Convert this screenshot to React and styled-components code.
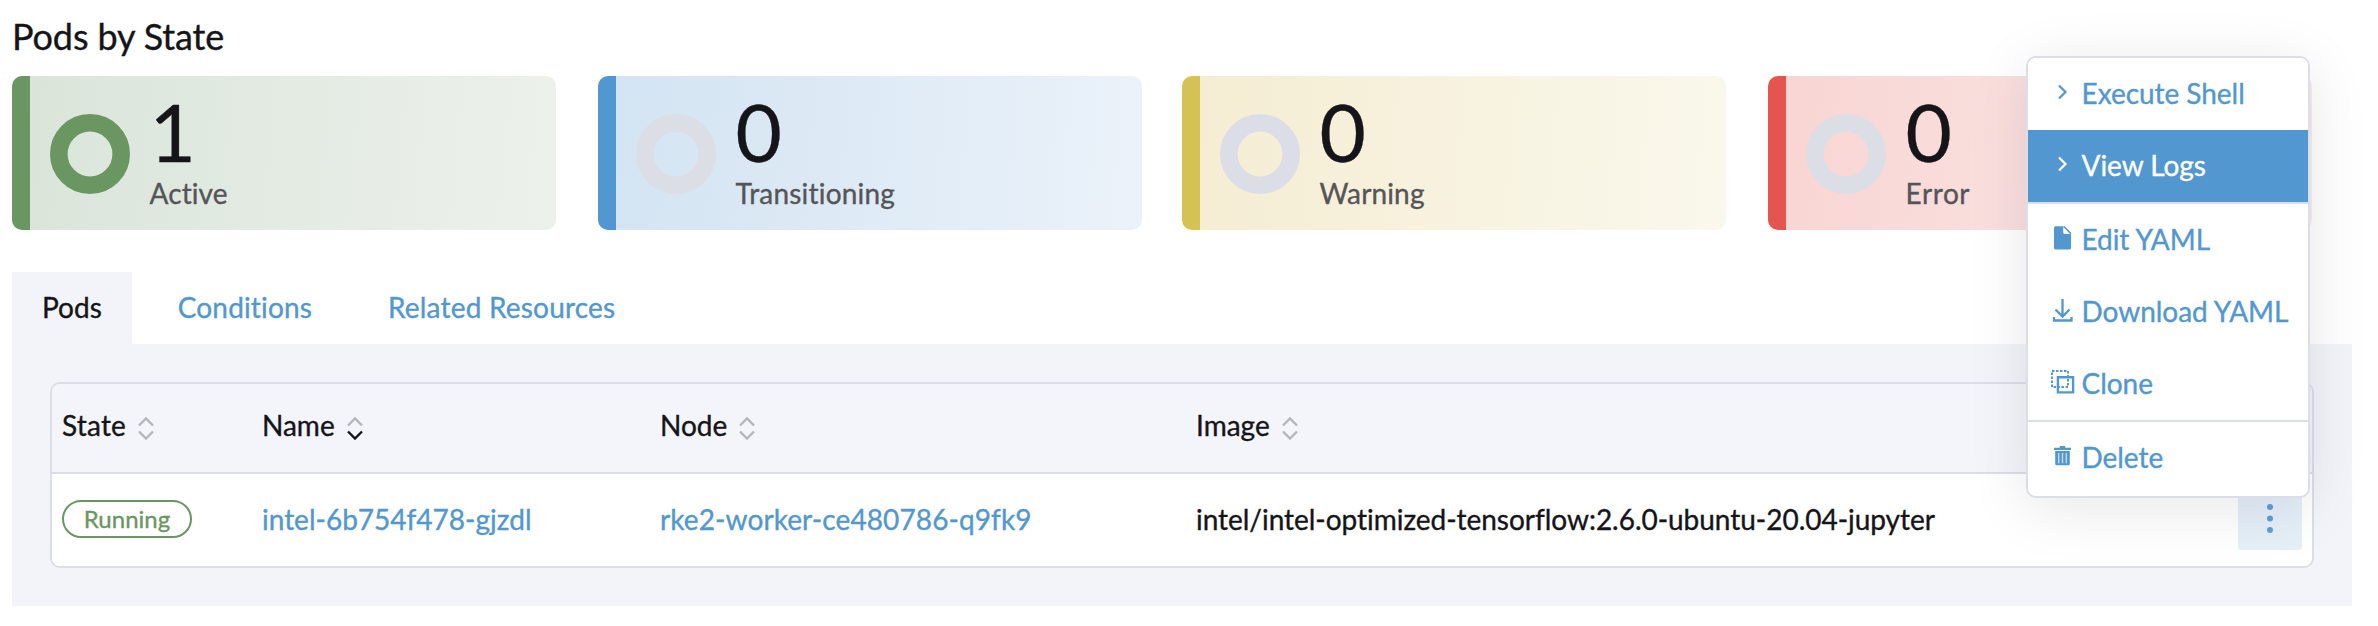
import React from 'react';
import styled, { createGlobalStyle } from 'styled-components';

const GlobalStyle = createGlobalStyle`
  * { box-sizing: border-box; }
  body {
    margin: 0;
    background: #fff;
    color: #141419;
    font-family: Lato, 'Liberation Sans', sans-serif;
    font-size: 28px;
    line-height: 34px;
    font-variant-ligatures: none;
    -webkit-text-stroke: 0.35px currentColor;
  }
`;

const Page = styled.main`
  position: relative;
  width: 2378px;
  height: 626px;
  padding: 15px 26px 20px 12px;
  overflow: hidden;
`;

const Title = styled.h3`
  margin: 0 0 17px;
  height: 44px;
  font-size: 36px;
  font-weight: 400;
  line-height: 43px;
  letter-spacing: -0.12px;
`;

const Cards = styled.section`
  display: grid;
  grid-template-columns: 586px 584px 586px 544px;
`;

const Card = styled.article`
  display: flex;
  align-items: center;
  width: 544px;
  height: 154px;
  padding-left: 20px;
  border-left: 18px solid ${(p) => p.$color};
  border-radius: 10px;
  background: linear-gradient(95deg, ${(p) => p.$from}, ${(p) => p.$to});
`;

const Ring = styled.svg`
  width: 80px;
  height: 80px;
  margin: 2px 19.5px 0 0;
`;

const CardText = styled.div`
  display: flex;
  flex-direction: column;
  gap: 5px;
  padding-bottom: 5px;
`;

const Count = styled.div`
  font-size: 80px;
  line-height: 80px;
`;

const CardLabel = styled.div`
  color: #555558;
  line-height: 34px;
  letter-spacing: ${(p) => p.$spacing}px;
`;

const TabBar = styled.nav`
  display: flex;
  margin-top: 42px;
`;

const Tab = styled.a`
  height: 72px;
  padding: 18px 30px;
  margin-right: 16px;
  letter-spacing: ${(p) => p.$spacing || 0}px;
  color: ${(p) => (p.$active ? '#141419' : '#5297cf')};
  background: ${(p) => (p.$active ? '#f3f4f9' : 'transparent')};
`;

const Panel = styled.section`
  height: 262px;
  padding: 38px;
  background: #f3f4f9;
`;

const Table = styled.div`
  height: 186px;
  border: 2px solid #dcdee7;
  border-radius: 10px;
  overflow: hidden;
`;

const Row = styled.div`
  display: grid;
  grid-template-columns: 200px 398px 536px 1fr 64px;
  align-items: center;
  padding: 0 10px;
`;

const HeaderRow = styled(Row)`
  height: 90px;
  border-bottom: 2px solid #dcdee7;
  background: #f4f5fa;
`;

const BodyRow = styled(Row)`
  height: 92px;
  background: #fff;
`;

const HeaderCell = styled.div`
  display: flex;
  align-items: center;
  gap: 11px;
  padding-bottom: 6px;
  letter-spacing: ${(p) => p.$spacing || 0}px;
`;

const SortSvg = styled.svg`
  width: 18px;
  height: 24px;
  margin-top: 6px;
  fill: none;
  stroke-width: 2.4;
`;

const CellText = styled.span`
  padding-bottom: 2px;
  letter-spacing: ${(p) => p.$spacing || 0}px;
`;

const Link = styled(CellText).attrs({ as: 'a' })`
  color: #5297cf;
`;

const Badge = styled.span`
  justify-self: start;
  width: 130px;
  height: 38px;
  margin-top: -2px;
  border: 2px solid #6a9662;
  border-radius: 19px;
  color: #6a9662;
  font-size: 24px;
  line-height: 33px;
  text-align: center;
`;

const ActionButton = styled.button`
  display: flex;
  justify-content: center;
  align-items: center;
  height: 60px;
  width: 64px;
  padding: 0 0 2px;
  border: 0;
  border-radius: 4px;
  background: #e5eff8;
`;

const Menu = styled.div`
  position: absolute;
  top: 56px;
  left: 2026px;
  width: 284px;
  height: 442px;
  border: 2px solid #dcdee7;
  border-radius: 10px;
  background: #fff;
  overflow: hidden;
  box-shadow: 0 10px 60px rgba(20, 20, 40, 0.1);
`;

const MenuItem = styled.div`
  display: flex;
  align-items: center;
  gap: 5.5px;
  height: 72px;
  padding-left: 20px;
  color: ${(p) => (p.$active ? '#fff' : '#5297cf')};
  background: ${(p) => (p.$active ? '#5297cf' : '#fff')};
  letter-spacing: -0.04px;
  white-space: nowrap;

  span { padding-bottom: 2px; }
`;

const MenuIcon = styled.svg`
  flex: none;
  width: 28px;
  height: 28px;
  margin-top: -4px;
`;

const Divider = styled.div`
  height: 2px;
  background: #dcdee7;
`;

const cards = [
  { label: 'Active', spacing: 0.1, count: 1, color: '#6a9662', ring: '#6a9662', from: '#dae5da', to: '#edf1ec' },
  { label: 'Transitioning', spacing: 0.2, count: 0, color: '#5297cf', ring: '#dcdee5', from: '#d3e4f2', to: '#ebf2fa' },
  { label: 'Warning', spacing: 0.15, count: 0, color: '#d6c155', ring: '#dcdee7', from: '#f5edd3', to: '#faf8ec' },
  { label: 'Error', spacing: 0.6, count: 0, color: '#e4554f', ring: '#dcdee5', from: '#f8d5d3', to: '#fbeceb' },
];

function Sort({ down }) {
  return (
    <SortSvg viewBox="0 0 18 24">
      <path d="M2 9.500 9 2.500l7 7" stroke="#b5b6bb" />
      <path d="M2 15.500 9 22.500l7-7" stroke={down ? '#141419' : '#b5b6bb'} />
    </SortSvg>
  );
}

const icons = {
  chevron: <path d="M11 7.500l6.500 6.500-6.500 6.500" fill="none" stroke="currentColor" strokeWidth="2.200" />,
  file: (
    <g fill="currentColor">
      <path d="M7.500 2.300h7.700v6q0 1.700 1.700 1.700h6.100v14q0 1.500-1.500 1.500h-14Q6 25.500 6 24V3.800Q6 2.300 7.500 2.300z" />
      <path d="M16.500 3.200l5.600 5.500h-4.600q-1 0-1-1z" fill="#fff" />
      <path d="M15.500 2.300h1.200L23 8.600V10h-.8L15.500 3.300z" />
    </g>
  ),
  download: (
    <path d="M14.500 3v17.500M7.500 13.500l7 7 7-7M6 21v3.500h17.500V21" fill="none" stroke="currentColor" strokeWidth="2.300" />
  ),
  clone: (
    <g fill="none" stroke="currentColor">
      <path d="M4 19V3H20V19z" strokeWidth="2" strokeDasharray="2.500 1.500" />
      <path d="M9.900 9.200h15.200v15.200H9.900z" strokeWidth="2.400" />
    </g>
  ),
  trash: (
    <g fill="currentColor">
      <path d="M6 5.800h5.500L12 4h5l.5 1.800H23V8H6z" />
      <path d="M7.200 9h14.600v12.800q0 1.500-1.500 1.500H8.700q-1.500 0-1.500-1.500z" />
      <path d="M10.700 11v10.300M14.500 11v10.300M18.300 11v10.300" stroke="#c4dbee" strokeWidth="1.400" />
    </g>
  ),
};

function Item({ icon, active, children }) {
  return (
    <MenuItem $active={active}>
      <MenuIcon viewBox="0 0 28 28">{icons[icon]}</MenuIcon>
      <span>{children}</span>
    </MenuItem>
  );
}

export default function App() {
  return (
    <>
      <GlobalStyle />
      <Page>
        <Title>Pods by State</Title>
        <Cards>
          {cards.map((c) => (
            <Card key={c.label} $color={c.color} $from={c.from} $to={c.to}>
              <Ring viewBox="0 0 80 80">
                <circle cx="40" cy="40" r="31.2" fill="none" stroke={c.ring} strokeWidth="17.600" />
              </Ring>
              <CardText>
                <Count>{c.count}</Count>
                <CardLabel $spacing={c.spacing}>{c.label}</CardLabel>
              </CardText>
            </Card>
          ))}
        </Cards>
        <TabBar>
          <Tab $active>Pods</Tab>
          <Tab $spacing={0.15}>Conditions</Tab>
          <Tab $spacing={0.2}>Related Resources</Tab>
        </TabBar>
        <Panel>
          <Table>
            <HeaderRow>
              <HeaderCell $spacing={0.2}>State<Sort /></HeaderCell>
              <HeaderCell>Name<Sort down /></HeaderCell>
              <HeaderCell>Node<Sort /></HeaderCell>
              <HeaderCell>Image<Sort /></HeaderCell>
            </HeaderRow>
            <BodyRow>
              <Badge>Running</Badge>
              <Link>intel-6b754f478-gjzdl</Link>
              <Link $spacing={0.1}>rke2-worker-ce480786-q9fk9</Link>
              <CellText $spacing={-0.03}>intel/intel-optimized-tensorflow:2.6.0-ubuntu-20.04-jupyter</CellText>
              <ActionButton aria-label="Row actions">
                <svg width="8" height="32" viewBox="0 0 8 32" fill="#5ea0d5">
                  <circle cx="4" cy="4" r="3" />
                  <circle cx="4" cy="15.500" r="3" />
                  <circle cx="4" cy="27" r="3" />
                </svg>
              </ActionButton>
            </BodyRow>
          </Table>
        </Panel>
        <Menu>
          <Item icon="chevron">Execute Shell</Item>
          <Item icon="chevron" active>View Logs</Item>
          <Divider />
          <Item icon="file">Edit YAML</Item>
          <Item icon="download">Download YAML</Item>
          <Item icon="clone">Clone</Item>
          <Divider />
          <Item icon="trash">Delete</Item>
        </Menu>
      </Page>
    </>
  );
}
